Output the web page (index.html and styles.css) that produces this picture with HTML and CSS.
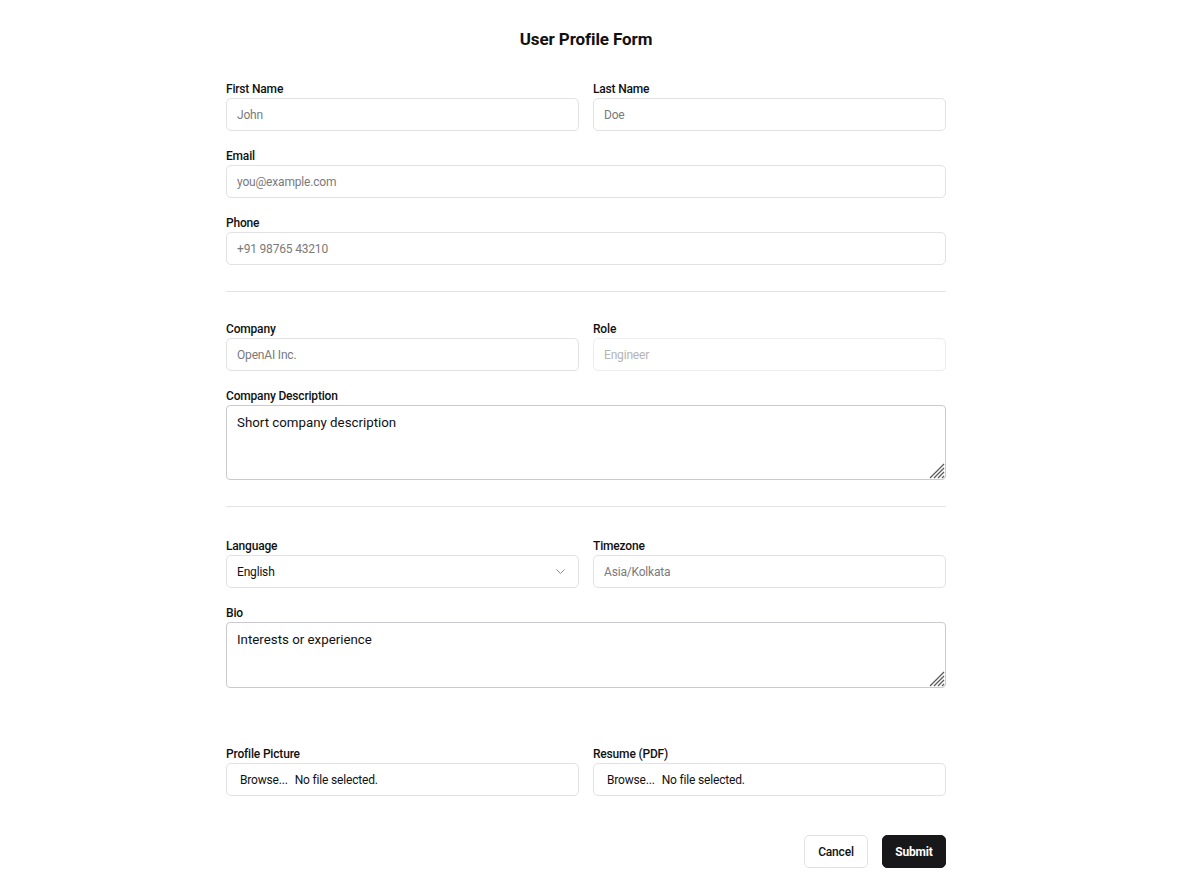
FILE: index.html
```html
<!DOCTYPE html>
<html lang="en">
<head>
<meta charset="utf-8">
<title>User Profile Form</title>
<link rel="stylesheet" href="styles.css">
</head>
<body>
<div class="page">
  <form class="form">
    <h1 class="title">User Profile Form</h1>

    <div class="row">
      <div class="field">
        <label class="label">First Name</label>
        <input class="input" type="text" placeholder="John">
      </div>
      <div class="field">
        <label class="label">Last Name</label>
        <input class="input" type="text" placeholder="Doe">
      </div>
    </div>
    <div class="field">
      <label class="label">Email</label>
      <input class="input" type="email" placeholder="you@example.com">
    </div>
    <div class="field">
      <label class="label">Phone</label>
      <input class="input" type="tel" placeholder="+91 98765 43210">
    </div>

    <hr class="divider">

    <div class="row">
      <div class="field">
        <label class="label">Company</label>
        <input class="input" type="text" placeholder="OpenAI Inc.">
      </div>
      <div class="field">
        <label class="label">Role</label>
        <input class="input input-disabled" type="text" placeholder="Engineer" disabled>
      </div>
    </div>
    <div class="field">
      <label class="label">Company Description</label>
      <div class="textarea-wrap">
        <textarea class="textarea textarea-tall">Short company description</textarea>
        <svg class="grip" width="17" height="17" viewBox="0 0 17 17"><g stroke="#5a5a5a" stroke-width="1.3"><line x1="16" y1="2" x2="2" y2="16"/><line x1="16" y1="6" x2="6" y2="16"/><line x1="16" y1="10" x2="10" y2="16"/><line x1="16" y1="14" x2="14" y2="16"/></g></svg>
      </div>
    </div>

    <hr class="divider divider-b">

    <div class="row">
      <div class="field">
        <label class="label">Language</label>
        <div class="select">
          <span>English</span>
          <svg class="chev" width="9" height="5" viewBox="0 0 9 5"><path d="M0.5 0.5l4 4 4-4" fill="none" stroke="#8a8a8a" stroke-width="1"/></svg>
        </div>
      </div>
      <div class="field">
        <label class="label">Timezone</label>
        <input class="input" type="text" placeholder="Asia/Kolkata">
      </div>
    </div>
    <div class="field">
      <label class="label">Bio</label>
      <div class="textarea-wrap">
        <textarea class="textarea textarea-short">Interests or experience</textarea>
        <svg class="grip" width="17" height="17" viewBox="0 0 17 17"><g stroke="#5a5a5a" stroke-width="1.3"><line x1="16" y1="2" x2="2" y2="16"/><line x1="16" y1="6" x2="6" y2="16"/><line x1="16" y1="10" x2="10" y2="16"/><line x1="16" y1="14" x2="14" y2="16"/></g></svg>
      </div>
    </div>

    <div class="spacer"></div>

    <div class="row">
      <div class="field">
        <label class="label">Profile Picture</label>
        <div class="file"><span class="browse">Browse...</span><span>No file selected.</span></div>
      </div>
      <div class="field">
        <label class="label">Resume (PDF)</label>
        <div class="file"><span class="browse">Browse...</span><span>No file selected.</span></div>
      </div>
    </div>

    <div class="actions">
      <button type="button" class="btn btn-outline">Cancel</button>
      <button type="button" class="btn btn-primary">Submit</button>
    </div>
  </form>
</div>
</body>
</html>
```

FILE: styles.css
```css
* { box-sizing: border-box; }

html, body {
  margin: 0;
  background: #ffffff;
}

body {
  font-family: Roboto, "Liberation Sans", Arial, sans-serif;
  color: #111111;
}

.page {
  padding: 0 8px 40px 0;
}

.form {
  width: 720px;
  margin: 0 auto;
  display: flex;
  flex-direction: column;
  gap: 16px;
}

.title {
  margin: 28px 0 14px;
  font-size: 17px;
  line-height: 22px;
  font-weight: 700;
  text-align: center;
  color: #111;
  letter-spacing: -0.1px;
}

.row {
  display: grid;
  grid-template-columns: 1fr 1fr;
  gap: 14px;
}

.field {
  display: flex;
  flex-direction: column;
  gap: 1px;
}

.label {
  font-size: 12px;
  line-height: 16px;
  padding-top: 1px;
  font-weight: 500;
  color: #111;
  letter-spacing: -0.18px;
}

.input,
.select,
.file {
  height: 33px;
  width: 100%;
  border: 1px solid #e2e2e4;
  border-radius: 5px;
  background: #fff;
  font-family: inherit;
  font-size: 12px;
  letter-spacing: -0.18px;
  color: #111;
  padding: 0 10px;
  outline: none;
}

.input::placeholder {
  color: #7a7a7a;
  opacity: 1;
}

.input-disabled {
  border-color: #ececef;
  background: #fff;
}

.input-disabled::placeholder {
  color: #b4b4b4;
}

.select {
  display: flex;
  align-items: center;
  justify-content: space-between;
  padding-right: 13px;
}

.file {
  display: flex;
  align-items: center;
  gap: 7px;
  padding-left: 13px;
}

.textarea-wrap {
  position: relative;
}

.textarea {
  display: block;
  width: 100%;
  border: 1px solid #c9c9cf;
  border-radius: 4px;
  font-family: Roboto, "Liberation Sans", Arial, sans-serif;
  font-size: 13.3px;
  line-height: 16px;
  color: #111;
  padding: 9px 10px;
  resize: none;
  outline: none;
}

.textarea-tall { height: 75px; }
.textarea-short { height: 66px; }

.grip {
  position: absolute;
  right: 1px;
  bottom: 1px;
}

.divider {
  border: 0;
  border-top: 1px solid #e4e4e7;
  margin: 10px 0 12px;
}

.divider-b {
  margin-bottom: 14px;
}

.spacer {
  height: 25px;
}

.actions {
  display: flex;
  justify-content: flex-end;
  gap: 14px;
  margin-top: 23px;
}

.btn {
  height: 33px;
  border-radius: 5px;
  font-family: inherit;
  font-size: 12px;
  font-weight: 500;
  letter-spacing: -0.18px;
  padding: 0;
  cursor: pointer;
}

.btn-outline {
  background: #fff;
  border: 1px solid #e2e2e4;
  color: #111;
  width: 64px;
}

.btn-primary {
  background: #18181b;
  border: 1px solid #18181b;
  color: #fff;
  font-weight: 700;
  width: 64px;
}
```
